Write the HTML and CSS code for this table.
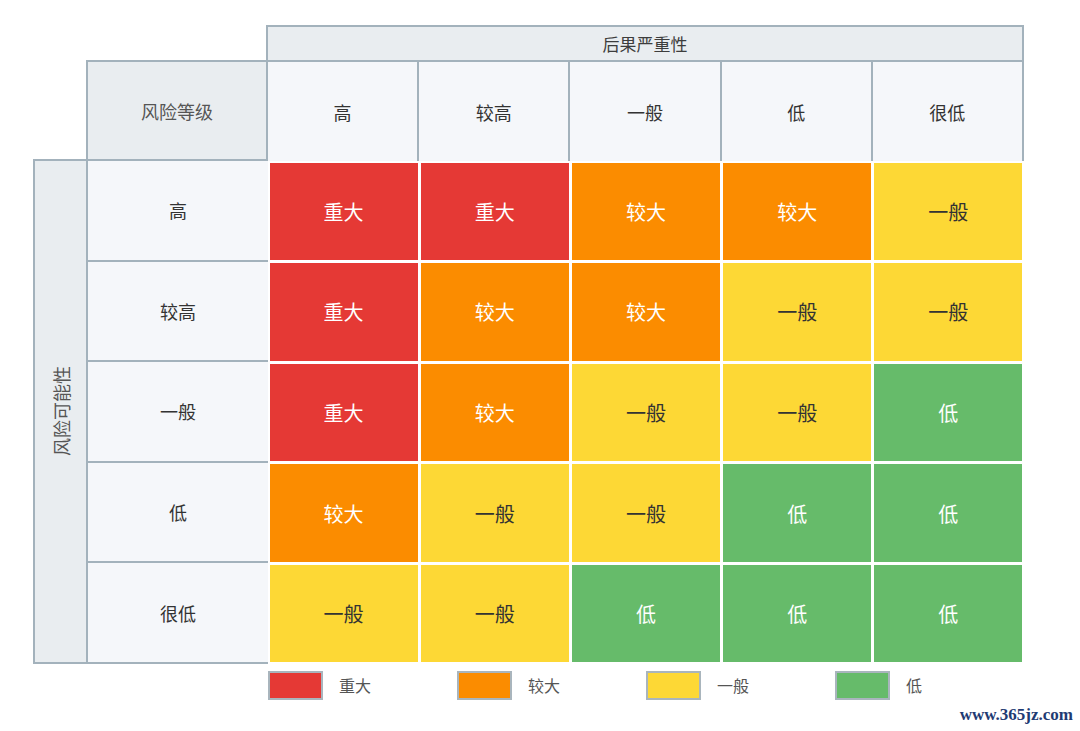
FILE: index.html
```html
<!DOCTYPE html>
<html lang="zh-CN">
<head>
<meta charset="utf-8">
<title>风险矩阵</title>
<link rel="stylesheet" href="styles.css">
</head>
<body>
<div class="matrix">
  <div class="spacer-top"></div>
  <div class="title">后果严重性</div>

  <div class="spacer-left"></div>
  <div class="corner">风险等级</div>
  <div class="colhead">高</div>
  <div class="colhead">较高</div>
  <div class="colhead">一般</div>
  <div class="colhead">低</div>
  <div class="colhead">很低</div>

  <div class="vlabel"><span>风险可能性</span></div>

  <div class="rowhead">高</div>
  <div class="cell major">重大</div>
  <div class="cell major">重大</div>
  <div class="cell large">较大</div>
  <div class="cell large">较大</div>
  <div class="cell normal">一般</div>

  <div class="rowhead">较高</div>
  <div class="cell major">重大</div>
  <div class="cell large">较大</div>
  <div class="cell large">较大</div>
  <div class="cell normal">一般</div>
  <div class="cell normal">一般</div>

  <div class="rowhead">一般</div>
  <div class="cell major">重大</div>
  <div class="cell large">较大</div>
  <div class="cell normal">一般</div>
  <div class="cell normal">一般</div>
  <div class="cell low">低</div>

  <div class="rowhead">低</div>
  <div class="cell large">较大</div>
  <div class="cell normal">一般</div>
  <div class="cell normal">一般</div>
  <div class="cell low">低</div>
  <div class="cell low">低</div>

  <div class="rowhead">很低</div>
  <div class="cell normal">一般</div>
  <div class="cell normal">一般</div>
  <div class="cell low">低</div>
  <div class="cell low">低</div>
  <div class="cell low">低</div>

  <div class="legend">
    <div class="legend-item"><span class="swatch major"></span><span class="legend-text">重大</span></div>
    <div class="legend-item"><span class="swatch large"></span><span class="legend-text">较大</span></div>
    <div class="legend-item"><span class="swatch normal"></span><span class="legend-text">一般</span></div>
    <div class="legend-item"><span class="swatch low"></span><span class="legend-text">低</span></div>
  </div>
</div>
<div class="watermark">www.365jz.com</div>
</body>
</html>
```

FILE: styles.css
```css
* {
  box-sizing: border-box;
}

html, body {
  margin: 0;
  padding: 0;
  background: #ffffff;
}

body {
  position: relative;
  width: 1080px;
  height: 731px;
  overflow: hidden;
  font-family: "Noto Sans CJK SC", "Noto Sans", sans-serif;
  color: #444444;
}

.matrix {
  display: grid;
  grid-template-columns: 53px 182px repeat(5, 151.2px);
  grid-template-rows: 35px 101px repeat(5, 100.6px) auto;
  margin: 25px 0 0 33px;
  width: 991px;
}

.spacer-top {
  grid-column: span 2;
}

.title {
  grid-column: span 5;
  margin-left: -2px;
  background: #e9edf0;
  border: 2px solid #a3b2bc;
  border-bottom: none;
  display: flex;
  align-items: center;
  justify-content: center;
  font-size: 17px;
  color: #3d3d3d;
}

.corner {
  background: #e9edf0;
  border: 2px solid #a3b2bc;
  display: flex;
  align-items: center;
  justify-content: center;
  font-size: 18px;
  color: #555;
}

.colhead {
  background: #f5f7fa;
  border-top: 2px solid #a3b2bc;
  border-right: 2px solid #a3b2bc;
  display: flex;
  align-items: center;
  justify-content: center;
  font-size: 18px;
  color: #333333;
}

.vlabel {
  grid-column: 1;
  grid-row: 3 / 8;
  margin-top: -2px;
  background: #e9edf0;
  border: 2px solid #a3b2bc;
  border-right: none;
  display: flex;
  align-items: center;
  justify-content: center;
}

.vlabel span {
  writing-mode: vertical-rl;
  text-orientation: sideways;
  transform: rotate(180deg);
  font-size: 18px;
  color: #555;
}

.rowhead {
  background: #f5f7fa;
  border-left: 2px solid #a3b2bc;
  border-bottom: 2px solid #a3b2bc;
  display: flex;
  align-items: center;
  justify-content: center;
  font-size: 18px;
  color: #333333;
}

.cell {
  margin: 1.5px;
  display: flex;
  align-items: center;
  justify-content: center;
  font-size: 20px;
}

.major {
  background: #e53935;
  color: #ffffff;
}

.large {
  background: #fb8c00;
  color: #ffffff;
}

.normal {
  background: #fdd835;
  color: #333333;
}

.low {
  background: #66bb6a;
  color: #ffffff;
}

.legend {
  grid-column: 3 / 8;
  display: flex;
  margin-top: 7px;
}

.legend-item {
  width: 189px;
  display: flex;
  align-items: center;
}

.swatch {
  width: 55px;
  height: 29px;
  border: 2px solid #a9b5bd;
}

.legend-text {
  margin-left: 16px;
  font-size: 16px;
  color: #555555;
}

.watermark {
  position: absolute;
  right: 7px;
  bottom: 6px;
  font-family: "Liberation Serif", serif;
  font-weight: bold;
  font-size: 17px;
  color: #1f3b73;
}
```
